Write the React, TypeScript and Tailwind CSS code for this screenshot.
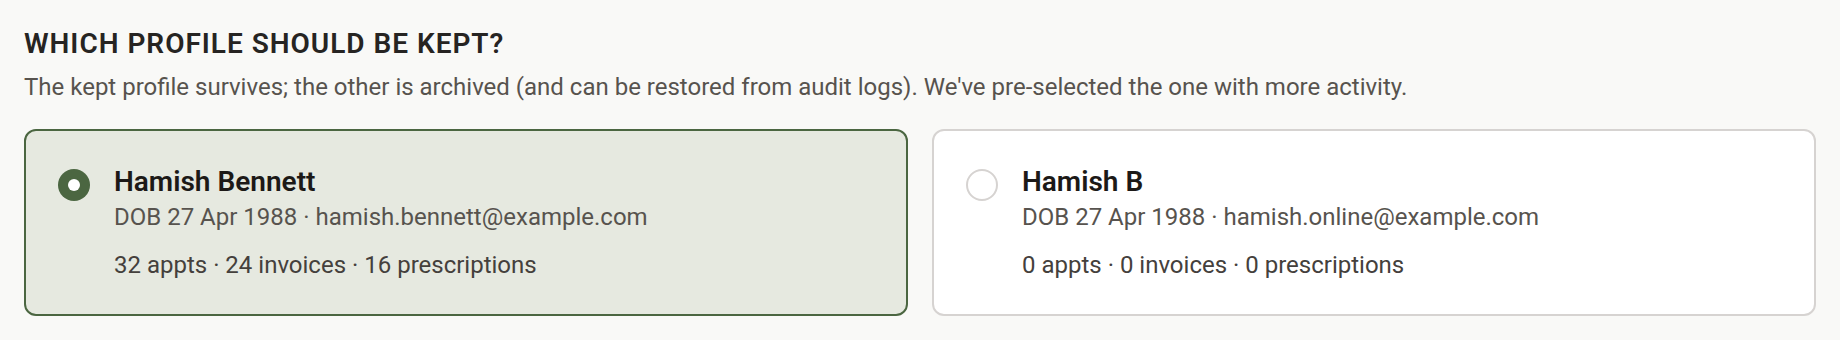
const profiles = [
  {
    id: "a",
    name: "Hamish Bennett",
    dob: "27 Apr 1988",
    email: "hamish.bennett@example.com",
    appts: 32,
    invoices: 24,
    prescriptions: 16,
  },
  {
    id: "b",
    name: "Hamish B",
    dob: "27 Apr 1988",
    email: "hamish.online@example.com",
    appts: 0,
    invoices: 0,
    prescriptions: 0,
  },
];

export default function App() {
  const selected = "a";

  return (
    <div
      className="min-h-[340px] w-full bg-[#f9f9f7] px-6 pt-[26px]"
      style={{ fontFamily: "Roboto, 'Liberation Sans', sans-serif" }}
    >
      <h2 className="text-[28px] leading-[36px] font-semibold tracking-[0.035em] text-[#262422]">
        WHICH PROFILE SHOULD BE KEPT?
      </h2>
      <p className="mt-[9px] text-[24px] leading-[32px] text-[#57534e]">
        The kept profile survives; the other is archived (and can be restored from audit logs). We've pre-selected the one with more activity.
      </p>

      <div className="mt-[26px] grid grid-cols-2 gap-6">
        {profiles.map((p) => {
          const isSel = p.id === selected;
          return (
            <label
              key={p.id}
              className={
                isSel
                  ? "flex cursor-pointer items-start gap-6 rounded-xl border-2 border-[#4b6641] bg-[#e6e9e0] px-8 pt-[31px] pb-[33px]"
                  : "flex cursor-pointer items-start gap-6 rounded-xl border-2 border-[#d6d3d1] bg-white px-8 pt-[31px] pb-[33px]"
              }
            >
              <span
                className={
                  isSel
                    ? "mt-[7px] flex h-8 w-8 shrink-0 items-center justify-center rounded-full bg-[#4b6641]"
                    : "mt-[7px] flex h-8 w-8 shrink-0 items-center justify-center rounded-full border-2 border-[#d6d3d1] bg-white"
                }
              >
                {isSel && <span className="h-3 w-3 rounded-full bg-white" />}
              </span>
              <div className="min-w-0">
                <div className="text-[28px] leading-[39px] font-semibold text-[#1c1917]">
                  {p.name}
                </div>
                <div className="text-[24px] leading-[32px] text-[#57534e]">
                  DOB {p.dob} · {p.email}
                </div>
                <div className="mt-4 text-[24px] leading-[32px] text-[#44403c]">
                  {p.appts} appts · {p.invoices} invoices · {p.prescriptions} prescriptions
                </div>
              </div>
            </label>
          );
        })}
      </div>
    </div>
  );
}
